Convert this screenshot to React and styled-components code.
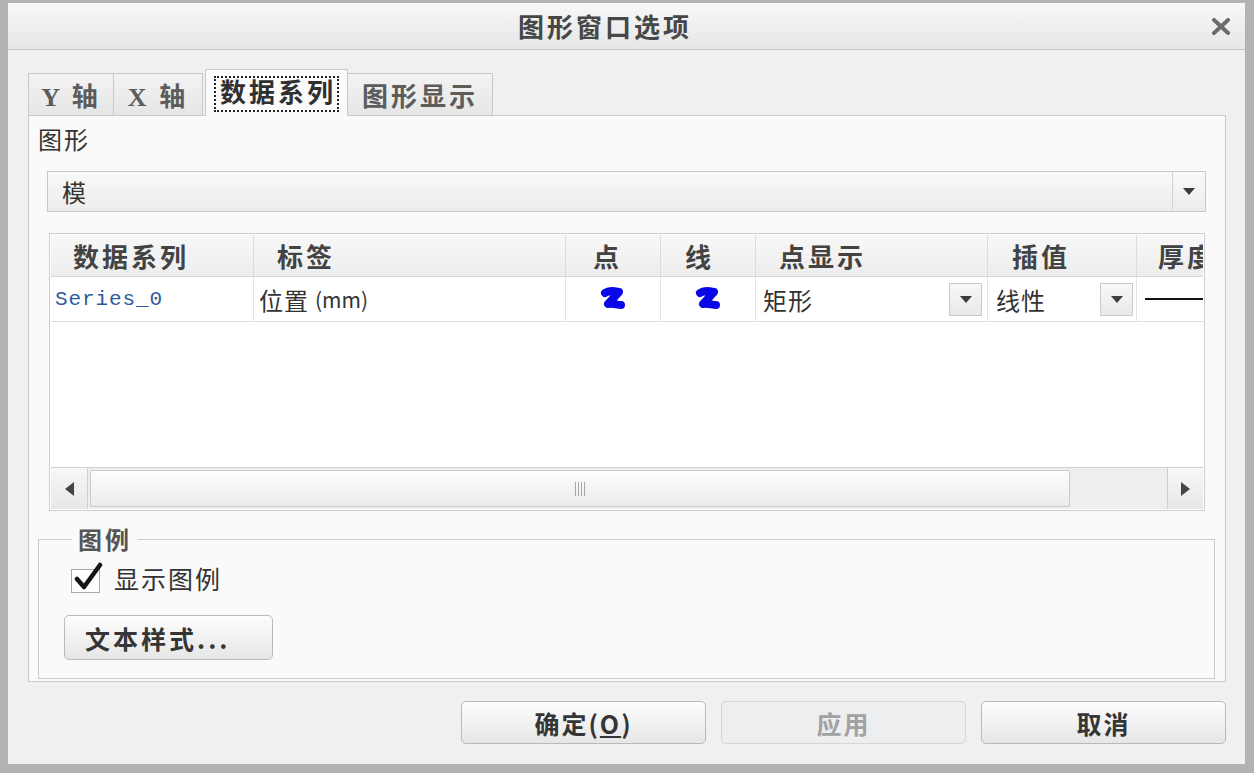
import React from 'react';
import styled, { createGlobalStyle } from 'styled-components';

const CJK = `"Noto Sans CJK SC", "Noto Sans", sans-serif`;

const Global = createGlobalStyle`
  html, body { margin: 0; padding: 0; background: #b5b5b5; }
  body { font-family: ${CJK}; color: #333; }
  * { box-sizing: border-box; }
`;

const Window = styled.div`
  width: 1254px;
  height: 773px;
  border-style: solid;
  border-color: #b3b3b3;
  border-width: 3px 9px 9px 8px;
  background: #eff0f2;
  display: flex;
  flex-direction: column;
  overflow: hidden;
`;

const TitleBar = styled.div`
  height: 47px;
  flex: none;
  display: flex;
  align-items: center;
  background: linear-gradient(#f8f8f8, #e6e6e7);
  border-bottom: 1px solid #c6c6c6;
`;

const Title = styled.div`
  flex: 1;
  text-align: center;
  font-size: 26px;
  font-weight: 700;
  letter-spacing: 3px;
  color: #474747;
  line-height: 1;
`;

const Close = styled.div`
  width: 43px;
  padding-right: 5px;
  display: flex;
  justify-content: center;
  align-items: center;
`;

const Body = styled.div`
  flex: 1;
  display: flex;
  flex-direction: column;
  padding: 19px 19px 0 20px;
`;

const TabRow = styled.div`
  display: flex;
  align-items: flex-end;
  height: 47px;
  margin-bottom: -1px;
  position: relative;
  z-index: 1;
`;

const Tab = styled.div`
  width: ${p => p.$w}px;
  height: ${p => (p.$active ? 47 : 43)}px;
  margin-left: ${p => p.$ml || 0}px;
  border: 1px solid #c9c9c9;
  border-bottom: ${p => (p.$active ? 'none' : '1px solid #c9c9c9')};
  border-left: ${p => (p.$noLeft ? 'none' : '1px solid #c9c9c9')};
  background: ${p => (p.$active ? '#fafafa' : 'linear-gradient(#f3f3f3, #e6e6e6)')};
  display: flex;
  align-items: center;
  justify-content: center;
  font-family: "Liberation Serif", "Noto Sans CJK SC", serif;
  font-size: 26px;
  font-weight: 700;
  letter-spacing: 3px;
  color: ${p => (p.$active ? '#303030' : '#5c5c5c')};
  padding-top: ${p => (p.$active ? 2 : 0)}px;
`;

const Focus = styled.span`
  border: 2px dotted #222;
  height: 36px;
  padding: 0 1px 0 4px;
  display: flex;
  align-items: center;
  line-height: 1;
`;

const Panel = styled.div`
  height: 567px;
  flex: none;
  border: 1px solid #c9c9c9;
  background: #fafafa;
  display: flex;
  flex-direction: column;
`;

const FieldLabel = styled.div`
  margin: 7px 0 0 9px;
  height: 32px;
  line-height: 32px;
  font-size: 24px;
  letter-spacing: 2px;
  color: #333;
`;

const Select = styled.div`
  margin: 16px 19px 0 18px;
  height: 41px;
  border: 1px solid #c8c8c8;
  background: linear-gradient(#f9f9f9, #ececec);
  display: flex;
  align-items: stretch;
`;

const SelectText = styled.div`
  flex: 1;
  padding-left: 14px;
  display: flex;
  align-items: center;
  font-size: 24px;
  color: #333;
`;

const ArrowBox = styled.div`
  width: ${p => p.$w || 33}px;
  border-left: 1px solid #d2d2d2;
  display: flex;
  align-items: center;
  justify-content: center;
`;

const Tri = styled.span`
  width: 0;
  height: 0;
  border-left: ${p => p.$s || 6}px solid transparent;
  border-right: ${p => p.$s || 6}px solid transparent;
  border-top: ${p => (p.$s || 6) + 1}px solid #3c3c3c;
`;

const Table = styled.div`
  margin: 21px 20px 0 20px;
  height: 278px;
  border: 1px solid #cdcdcd;
  padding: 1px;
  background: #fff;
  display: flex;
  flex-direction: column;
`;

const cols = '203px 312px 95px 95px 232px 149px 1fr';

const HeaderRow = styled.div`
  display: grid;
  grid-template-columns: ${cols};
  height: 42px;
  background: linear-gradient(#f8f8f8, #ededed);
  border-bottom: 1px solid #d6d6d6;
`;

const HeaderCell = styled.div`
  border-right: 1px solid #dcdcdc;
  padding-left: ${p => p.$pl}px;
  display: flex;
  align-items: center;
  font-size: 26px;
  font-weight: 700;
  letter-spacing: 3px;
  color: #434343;
  white-space: nowrap;
  overflow: hidden;
  &:last-child { border-right: none; }
`;

const DataRow = styled.div`
  display: grid;
  grid-template-columns: ${cols};
  height: 45px;
  border-bottom: 1px solid #dfdfdf;
`;

const Cell = styled.div`
  border-right: 1px solid #e2e2e2;
  padding-left: ${p => p.$pl || 0}px;
  padding-right: ${p => p.$pr || 0}px;
  display: flex;
  align-items: center;
  justify-content: ${p => p.$center ? 'center' : 'flex-start'};
  font-size: 24px;
  letter-spacing: 1px;
  color: #333;
  white-space: nowrap;
  overflow: hidden;
  &:last-child { border-right: none; }
`;

const SeriesName = styled.span`
  font-family: "Liberation Mono", "DejaVu Sans Mono", monospace;
  font-size: 21px;
  letter-spacing: 0.9px;
  color: #2f5a9c;
`;

const Unit = styled.span`
  font-size: 21px;
  margin-left: 6px;
  letter-spacing: 0;
`;

const CellText = styled.span`
  flex: 1;
`;

const MiniDrop = styled.div`
  width: 33px;
  height: 33px;
  border: 1px solid #c9c9c9;
  background: linear-gradient(#f8f8f8, #e8e8e8);
  display: flex;
  align-items: center;
  justify-content: center;
`;

const ThickLine = styled.div`
  width: 100%;
  height: 2px;
  margin-left: 8px;
  background: #111;
`;

const Spacer = styled.div`
  flex: 1;
`;

const ScrollBar = styled.div`
  height: 42px;
  display: flex;
  border-top: 1px solid #d0d0d0;
  background: #eeeeee;
`;

const ScrollBtn = styled.div`
  width: ${p => p.$w}px;
  background: linear-gradient(#f7f7f7, #e7e7e7);
  border-${p => p.$side}: 1px solid #cfcfcf;
  display: flex;
  align-items: center;
  justify-content: center;
`;

const TriSide = styled.span`
  width: 0;
  height: 0;
  border-top: 7px solid transparent;
  border-bottom: 7px solid transparent;
  ${p => p.$dir === 'left' ? 'border-right: 9px solid #444;' : 'border-left: 9px solid #444;'}
`;

const Thumb = styled.div`
  width: 980px;
  margin: 2px 0 2px 2px;
  border: 1px solid #cacaca;
  border-radius: 2px;
  background: linear-gradient(#fdfdfd, #ebebeb);
  display: flex;
  align-items: center;
  justify-content: center;
`;

const Grip = styled.div`
  display: flex;
  gap: 2px;
  & > span { width: 1px; height: 14px; background: #a8a8a8; }
`;

const Track = styled.div`
  flex: 1;
`;

const Group = styled.div`
  margin: 28px 10px 0 9px;
  height: 140px;
  border: 1px solid #cbcbcb;
  display: flex;
  flex-direction: column;
  align-items: flex-start;
`;

const GroupTitle = styled.div`
  margin: -14px 0 0 33px;
  padding: 0 6px;
  background: #fafafa;
  font-size: 24px;
  font-weight: 700;
  letter-spacing: 3px;
  line-height: 26px;
  color: #555;
`;

const CheckRow = styled.label`
  margin: 11px 0 0 32px;
  display: flex;
  align-items: center;
  gap: 14px;
  font-size: 25px;
  letter-spacing: 2px;
  color: #333;
  height: 30px;
`;

const CheckBox = styled.span`
  width: 29px;
  height: 24px;
  margin-top: 6px;
  border: 1px solid #a9a9a9;
  background: #fff;
  position: relative;
  & > svg { position: absolute; left: 1px; top: -9px; }
`;

const PushButton = styled.button`
  width: ${p => p.$w}px;
  height: ${p => p.$h}px;
  margin: ${p => p.$m || 0};
  border: 1px solid ${p => (p.$disabled ? '#d6d6d6' : '#b9b9b9')};
  border-radius: 5px;
  background: ${p => (p.$disabled ? '#eceef0' : 'linear-gradient(#fdfdfd, #e6e6e6)')};
  font-family: ${CJK};
  font-size: 25px;
  font-weight: 700;
  letter-spacing: ${p => p.$ls || 2}px;
  color: ${p => (p.$disabled ? '#a2a2a2' : '#353535')};
  text-align: ${p => p.$align || 'center'};
  padding: 0 0 0 ${p => p.$pl || 0}px;
  cursor: default;
`;

const Footer = styled.div`
  display: flex;
  justify-content: flex-end;
  gap: 15px;
  margin-top: 19px;
`;

const Blob = () => (
  <svg width="28" height="26" viewBox="0 0 28 26">
    <path d="M6 7 C 10 4, 15 5, 20 6 L 9 18 C 14 17, 18 19, 22 19" fill="none" stroke="#0808e6" strokeWidth="8" strokeLinecap="round" strokeLinejoin="round" />
  </svg>
);

const Check = () => (
  <svg width="30" height="32" viewBox="0 0 30 32">
    <path d="M4 18 L11 26 L27 4" fill="none" stroke="#151515" strokeWidth="4.5" strokeLinecap="round" strokeLinejoin="round" />
  </svg>
);

export default function App() {
  return (
    <>
      <Global />
      <Window>
        <TitleBar>
          <Title>图形窗口选项</Title>
          <Close>
            <svg width="18" height="17" viewBox="0 0 18 17">
              <path d="M2 2 L16 15 M16 2 L2 15" stroke="#6c6c6c" strokeWidth="4" strokeLinecap="square" />
            </svg>
          </Close>
        </TitleBar>
        <Body>
          <TabRow>
            <Tab $w={86}>Y 轴</Tab>
            <Tab $w={89} $noLeft>X 轴</Tab>
            <Tab $w={143} $ml={2} $active><Focus>数据系列</Focus></Tab>
            <Tab $w={145} $noLeft>图形显示</Tab>
          </TabRow>
          <Panel>
            <FieldLabel>图形</FieldLabel>
            <Select>
              <SelectText>模</SelectText>
              <ArrowBox><Tri /></ArrowBox>
            </Select>
            <Table>
              <HeaderRow>
                <HeaderCell $pl={22}>数据系列</HeaderCell>
                <HeaderCell $pl={23}>标签</HeaderCell>
                <HeaderCell $pl={27}>点</HeaderCell>
                <HeaderCell $pl={24}>线</HeaderCell>
                <HeaderCell $pl={23}>点显示</HeaderCell>
                <HeaderCell $pl={24}>插值</HeaderCell>
                <HeaderCell $pl={21}>厚度</HeaderCell>
              </HeaderRow>
              <DataRow>
                <Cell $pl={4}><SeriesName>Series_0</SeriesName></Cell>
                <Cell $pl={5}>位置<Unit>(mm)</Unit></Cell>
                <Cell $center><Blob /></Cell>
                <Cell $center><Blob /></Cell>
                <Cell $pl={7} $pr={5}><CellText>矩形</CellText><MiniDrop><Tri $s={6} /></MiniDrop></Cell>
                <Cell $pl={8} $pr={3}><CellText>线性</CellText><MiniDrop><Tri $s={6} /></MiniDrop></Cell>
                <Cell><ThickLine /></Cell>
              </DataRow>
              <Spacer />
              <ScrollBar>
                <ScrollBtn $w={37} $side="right"><TriSide $dir="left" /></ScrollBtn>
                <Thumb>
                  <Grip><span /><span /><span /><span /></Grip>
                </Thumb>
                <Track />
                <ScrollBtn $w={36} $side="left"><TriSide $dir="right" /></ScrollBtn>
              </ScrollBar>
            </Table>
            <Group>
              <GroupTitle>图例</GroupTitle>
              <CheckRow>
                <CheckBox><Check /></CheckBox>
                显示图例
              </CheckRow>
              <PushButton $w={209} $h={45} $m="22px 0 0 25px" $align="left" $pl={20} $ls={3}>文本样式...</PushButton>
            </Group>
          </Panel>
          <Footer>
            <PushButton $w={245} $h={43}>确定(<u>O</u>)</PushButton>
            <PushButton $w={245} $h={43} $disabled>应用</PushButton>
            <PushButton $w={245} $h={43}>取消</PushButton>
          </Footer>
        </Body>
      </Window>
    </>
  );
}
